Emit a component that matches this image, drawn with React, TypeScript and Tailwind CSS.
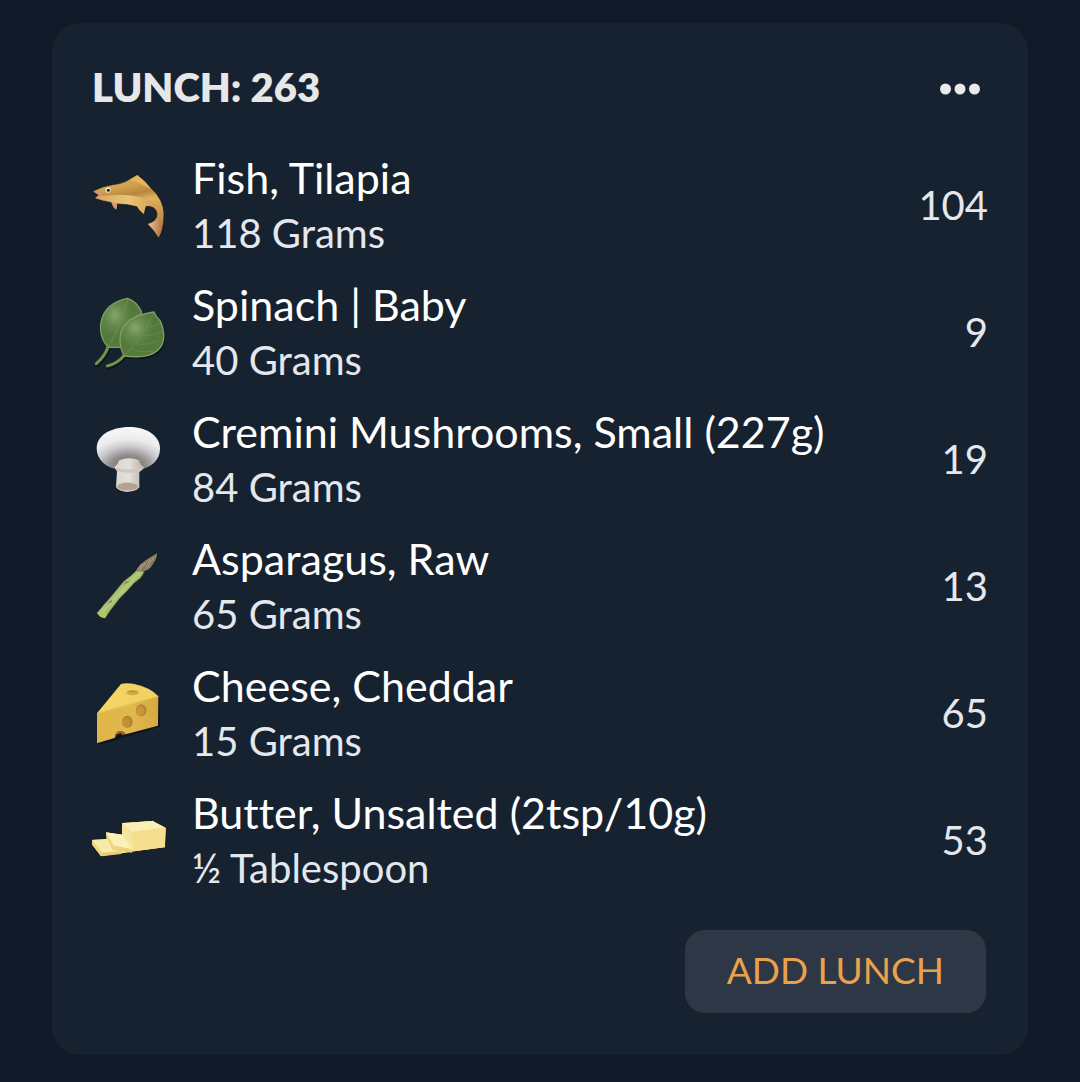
import type { ReactNode } from 'react';

function Fish() {
  return (
    <svg viewBox="36 0 228 270" className="h-[90px] w-[76px] shrink-0" aria-hidden="true">
      <defs>
        <linearGradient id="fishBody" x1="0" y1="0" x2="0.25" y2="1">
          <stop offset="0" stopColor="#e0b65c" />
          <stop offset="0.28" stopColor="#d1a14c" />
          <stop offset="0.42" stopColor="#b98540" />
          <stop offset="0.54" stopColor="#dcb45a" />
          <stop offset="0.75" stopColor="#cf9a50" />
          <stop offset="1" stopColor="#b37d45" />
        </linearGradient>
        <linearGradient id="fishBelly" x1="0" y1="0" x2="1" y2="0">
          <stop offset="0" stopColor="#daa468" />
          <stop offset="0.5" stopColor="#e8c673" />
          <stop offset="1" stopColor="#cc9a4e" />
        </linearGradient>
        <linearGradient id="fishTail" x1="0" y1="0" x2="1" y2="0.3">
          <stop offset="0" stopColor="#f0cda0" />
          <stop offset="1" stopColor="#b37a48" />
        </linearGradient>
      </defs>
      <path d="M38 94 Q68 78 98 74 Q132 70 148 58 L172 44 Q198 63 215 86 Q250 118 252 160 Q253 205 236 235 Q222 210 203 192 Q232 183 231 160 Q227 137 196 139 L192 164 Q180 156 170 140 Q143 133 112 132 L109 151 Q98 142 94 128 Q68 125 43 115 L55 105 Z" fill="url(#fishBody)" stroke="#10151c" strokeWidth="2" />
      <path d="M60 109 Q130 98 184 112 Q225 123 241 158 Q236 137 205 135 L198 137 L191 161 Q180 153 171 137 Q143 129 111 129 L108 148 Q99 140 95 125 Q70 122 48 114 Z" fill="url(#fishBelly)" />
      <path d="M94 126 L111 130 L109 149 Q98 142 94 126Z" fill="#d99a6e" />
      <path d="M204 192 Q224 188 233 174 Q248 188 245 210 L236 232 Q221 209 204 192Z" fill="url(#fishTail)" />
      <path d="M149 59 Q178 66 213 88 Q197 65 172 46Z" fill="#e3b857" />
      <path d="M42 96 L65 94 Q72 103 60 111 L46 115 L56 105Z" fill="#d39865" />
      <circle cx="84" cy="90" r="8" fill="#f5ead5" />
      <circle cx="85" cy="91" r="4.5" fill="#1b1815" />
    </svg>
  );
}

function Spinach() {
  return (
    <svg viewBox="36 6 228 270" className="h-[90px] w-[76px] shrink-0" aria-hidden="true">
      <defs>
        <radialGradient id="leaf" cx="0.35" cy="0.35" r="0.7">
          <stop offset="0" stopColor="#87a56c" />
          <stop offset="0.3" stopColor="#668a4c" />
          <stop offset="0.6" stopColor="#54793c" />
          <stop offset="1" stopColor="#557a3e" />
        </radialGradient>
      </defs>
      <g fill="none" stroke="#0c151a" strokeWidth="12" strokeLinecap="round" transform="translate(3 4)">
        <path d="M82 188 Q74 215 49 237" />
        <path d="M130 212 Q115 235 82 244" />
        <path d="M130 212 Q113 170 129 137 Q145 94 222 82 Q227 92 242 110 Q258 146 243 184 Q219 226 130 212Z" fill="#0c151a" strokeWidth="5" />
      </g>
      <path d="M88 187 C66 174 57 137 64 108 C73 66 108 47 143 40 Q169 49 184 79 C184 140 156 182 120 187Z" fill="url(#leaf)" stroke="#7f9f63" strokeWidth="4" />
      <path d="M143 42 Q125 123 82 188" fill="none" stroke="#6c914e" strokeWidth="3" />
      <path d="M84 186 Q75 213 49 236" fill="none" stroke="#72934f" strokeWidth="9" strokeLinecap="round" />
      <path d="M132 213 C115 180 117 143 133 123 C151 94 187 87 222 81 Q228 96 241 108 C256 140 253 170 242 186 C218 218 177 218 132 213Z" fill="url(#leaf)" stroke="#7f9f63" strokeWidth="4" />
      <path d="M222 84 Q187 157 132 213 M165 176 Q202 183 235 165 M183 152 Q219 154 246 138 M198 127 Q220 127 238 113 M152 190 Q188 205 220 199" fill="none" stroke="#6f924f" strokeWidth="2" />
      <path d="M132 212 Q114 235 82 243" fill="none" stroke="#72934f" strokeWidth="9" strokeLinecap="round" />
    </svg>
  );
}

function Mushroom() {
  return (
    <svg viewBox="36 -3 228 270" className="h-[90px] w-[76px] shrink-0" aria-hidden="true">
      <defs>
        <radialGradient id="cap" cx="0.5" cy="0.95" r="0.95">
          <stop offset="0" stopColor="#6b6765" />
          <stop offset="0.3" stopColor="#8f8c8c" />
          <stop offset="0.52" stopColor="#cbcacc" />
          <stop offset="0.7" stopColor="#ececee" />
          <stop offset="1" stopColor="#f8f8f9" />
        </radialGradient>
        <linearGradient id="stem" x1="0" y1="0" x2="1" y2="0">
          <stop offset="0" stopColor="#dcd6d0" />
          <stop offset="0.5" stopColor="#e4dfda" />
          <stop offset="1" stopColor="#b9b0aa" />
        </linearGradient>
      </defs>
      <path d="M50 99 C50 62 92 36 148 36 C205 36 240 66 240 101 C240 136 212 159 178 163 L113 163 C78 158 50 135 50 99Z" fill="url(#cap)" />
      <path d="M103 156 Q115 148 118 136 Q148 124 177 136 Q179 149 192 157 Q187 167 178 170 L178 217 Q161 231 139 230 Q116 227 108 215 L111 169Z" fill="url(#stem)" />
      <path d="M104 157 Q143 170 192 157 Q187 167 178 170 Q143 177 111 169Z" fill="#cfc7be" />
      <ellipse cx="143" cy="215" rx="33" ry="13" fill="#b0a594" stroke="#d8d0c5" strokeWidth="3" />
    </svg>
  );
}

function Asparagus() {
  return (
    <svg viewBox="36 3 228 270" className="h-[90px] w-[76px] shrink-0" aria-hidden="true">
      <defs>
        <linearGradient id="stalk" x1="0" y1="0" x2="1" y2="1">
          <stop offset="0.3" stopColor="#7f9853" />
          <stop offset="0.48" stopColor="#b3c77a" />
          <stop offset="0.7" stopColor="#7f9b4e" />
        </linearGradient>
      </defs>
      <path d="M51 218 Q73 191 93 169 Q113 145 130 124 Q156 105 174 86 L194 95 Q185 117 164 128 Q143 153 119 176 Q99 201 75 235 Q59 233 51 218Z" fill="url(#stalk)" stroke="#17221c" strokeWidth="2" />
      <path d="M66 219 Q109 175 151 127 L181 99" fill="none" stroke="#b4c97c" strokeWidth="7" />
      <path d="M79 193 L94 179 L98 186Z M128 135 L138 123 L151 125Z" fill="#9a8867" />
      <path d="M51 218 L66 210 L82 222 L75 235 Q59 233 51 218Z" fill="#a9c968" />
      <path d="M169 94 Q178 71 204 56 L231 40 Q232 54 217 75 Q209 90 188 95Z" fill="#8e8065" />
      <path d="M180 90 Q184 75 197 70 L194 83 Q208 71 210 59 M202 83 Q216 69 221 52 M171 90 L185 71" fill="none" stroke="#b0a082" strokeWidth="3" />
      <path d="M188 91 L202 69 M208 78 L222 59" stroke="#6b6a4e" strokeWidth="3" />
    </svg>
  );
}

function Cheese() {
  return (
    <svg viewBox="36 -6 228 270" className="h-[90px] w-[76px] shrink-0" aria-hidden="true">
      <defs>
        <linearGradient id="cheeseTop" x1="0" y1="0.7" x2="1" y2="0.4">
          <stop offset="0" stopColor="#f5d765" />
          <stop offset="1" stopColor="#efd064" />
        </linearGradient>
        <linearGradient id="cheeseSide" x1="0" y1="0" x2="1" y2="0">
          <stop offset="0" stopColor="#dfb548" />
          <stop offset="0.55" stopColor="#e2b94e" />
          <stop offset="1" stopColor="#d5a942" />
        </linearGradient>
      </defs>
      <path d="M52 132 L54 225 L108 211 L141 199 L240 170 L238 84Z" fill="#0d141c" />
      <path d="M51 130 L123 42 Q139 37 163 42 Q213 53 235 79Z" fill="url(#cheeseTop)" />
      <path d="M51 130 L235 78 L234 167 L137 193 Q130 181 118 184 Q105 188 105 203 L51 220Z" fill="url(#cheeseSide)" />
      <path d="M52 130 L234 79" stroke="#f0cb5c" strokeWidth="3" />
      <path d="M105 203 Q105 185 119 183 Q132 183 137 193 L127 196 L123 190 L111 193 Z" fill="#976520" />
      <ellipse cx="158" cy="68" rx="19" ry="8" fill="#d6ab40" />
      <path d="M141 66 Q157 58 175 67 Q157 63 141 66Z" fill="#ad7e2c" />
      <ellipse cx="184" cy="121" rx="16" ry="18" fill="#b98631" />
      <ellipse cx="181" cy="123" rx="12" ry="14" fill="#c99739" />
      <ellipse cx="142" cy="155" rx="16" ry="18" fill="#b4812f" />
      <ellipse cx="139" cy="157" rx="12" ry="14" fill="#c29037" />
    </svg>
  );
}

function Butter() {
  return (
    <svg viewBox="36 0 228 270" className="h-[90px] w-[76px] shrink-0" aria-hidden="true">
      <path d="M124 83 L218 76 L259 99 L256 158 L161 171 L118 178 L62 185 L35 149 L35 133 L78 131 L76 110 L126 117Z" fill="#f3e092" stroke="#10171f" strokeWidth="3" />
      <path d="M126 84 L218 78 L257 98 L155 110Z" fill="#faf0b6" />
      <path d="M126 84 L155 110 L161 169 L126 119Z" fill="#f5e49c" />
      <path d="M155 110 L257 98 L255 157 L161 169Z" fill="#f4df8e" />
      <path d="M36 135 L83 132 L124 169 L67 173Z" fill="#f8eaa8" />
      <path d="M36 135 L67 173 L64 184 L36 149Z" fill="#edd584" />
      <path d="M67 173 L124 169 L124 177 L64 184Z" fill="#e6cc78" />
      <path d="M78 112 L127 119 L158 163 L101 152Z" fill="#fbf0b8" />
      <path d="M78 112 L101 152 L98 166 L83 134Z" fill="#ecd485" />
      <path d="M101 152 L156 163 L156 173 L99 165Z" fill="#ead180" />
    </svg>
  );
}

type Item = { name: string; amount: string; calories: number; icon: ReactNode };

const items: Item[] = [
  { name: 'Fish, Tilapia', amount: '118 Grams', calories: 104, icon: <Fish /> },
  { name: 'Spinach | Baby', amount: '40 Grams', calories: 9, icon: <Spinach /> },
  { name: 'Cremini Mushrooms, Small (227g)', amount: '84 Grams', calories: 19, icon: <Mushroom /> },
  { name: 'Asparagus, Raw', amount: '65 Grams', calories: 13, icon: <Asparagus /> },
  { name: 'Cheese, Cheddar', amount: '15 Grams', calories: 65, icon: <Cheese /> },
  { name: 'Butter, Unsalted (2tsp/10g)', amount: '½ Tablespoon', calories: 53, icon: <Butter /> },
];

export default function App() {
  return (
    <main className="min-h-screen bg-[#0f1927] px-[52px] py-[23px] font-['Lato',sans-serif] text-[#e4e7ed] [font-variant-ligatures:none]">
      <section className="rounded-[28px] bg-[#172230] px-10 pt-8 pb-[42px]">
        <header className="flex h-16 items-center justify-between pr-2">
          <h1 className="text-[40px] leading-[48px] font-extrabold text-[#e6e7e9]">LUNCH: 263</h1>
          <button type="button" aria-label="Lunch options" className="pt-1">
            <svg viewBox="0 0 40 12" className="h-3 w-10" fill="#e8e9eb">
              <circle cx="5.5" cy="6" r="5.5" />
              <circle cx="20" cy="6" r="5.5" />
              <circle cx="34.5" cy="6" r="5.5" />
            </svg>
          </button>
        </header>
        <ul className="mt-[22px]">
          {items.map((item) => (
            <li key={item.name} className="flex h-[127px] items-center">
              {item.icon}
              <div className="ml-6 min-w-0 flex-1">
                <p className="text-[43px] leading-[56px] text-white">{item.name}</p>
                <p className="text-[40px] leading-[54px]">{item.amount}</p>
              </div>
              <span className="text-[40px] leading-[56px]">{item.calories}</span>
            </li>
          ))}
        </ul>
        <div className="mt-[27px] flex justify-end pr-0.5">
          <button type="button" className="h-[83px] rounded-[20px] bg-[#2e3745] px-[42px] pb-1 text-[37px] text-[#e9a24b]">
            ADD LUNCH
          </button>
        </div>
      </section>
    </main>
  );
}
